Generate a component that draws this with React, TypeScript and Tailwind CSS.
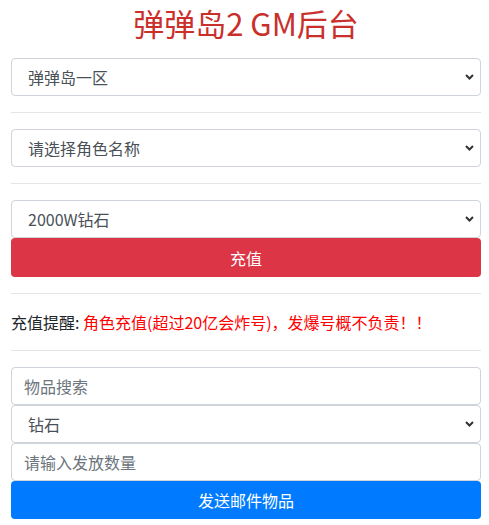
import React from 'react';

const font = { fontFamily: '"Noto Sans CJK SC", "Noto Sans", sans-serif' };

const Chevron = () => (
  <svg className="pointer-events-none absolute right-[7px] top-1/2 -translate-y-1/2" width="9" height="6" viewBox="0 0 9 6" fill="none">
    <path d="M1 1l3.5 3.5L8 1" stroke="#333" strokeWidth="2" />
  </svg>
);

const Select = ({ value, className = '' }: { value: string; className?: string }) => (
  <div className={`relative ${className}`}>
    <select
      defaultValue={value}
      className="block h-[38px] w-full appearance-none rounded-[4px] border border-[#ced4da] bg-white pl-4 pr-8 text-base text-[#495057] outline-none"
    >
      <option>{value}</option>
    </select>
    <Chevron />
  </div>
);

const Input = ({ placeholder }: { placeholder: string }) => (
  <input
    placeholder={placeholder}
    className="block h-[38px] w-full rounded-[4px] border border-[#ced4da] bg-white px-3 text-base text-[#495057] outline-none placeholder:text-[#6c757d]"
  />
);

const Divider = () => <hr className="my-4 border-t border-black/10" />;

export default function App() {
  return (
    <div className="min-h-[525px] bg-white" style={font}>
      <div className="mx-[11px] w-[470px]">
        <h2 className="mb-3 text-center text-[31px] leading-[46px] text-[#c9302c]">弹弹岛2 GM后台</h2>

        <Select value="弹弹岛一区" />
        <Divider />
        <Select value="请选择角色名称" />
        <Divider />
        <Select value="2000W钻石" />
        <button className="block h-[39px] w-full rounded-[4px] bg-[#dc3545] text-base text-white">充值</button>
        <Divider />

        <p className="text-base leading-6 text-[#212529]">
          充值提醒: <span className="text-[#ff0000]">角色充值(超过20亿会炸号)，发爆号概不负责！！</span>
        </p>
        <Divider />

        <Input placeholder="物品搜索" />
        <Select value="钻石" />
        <Input placeholder="请输入发放数量" />
        <button className="block h-[38px] w-full rounded-[4px] bg-[#007bff] text-base text-white">发送邮件物品</button>
      </div>
    </div>
  );
}
